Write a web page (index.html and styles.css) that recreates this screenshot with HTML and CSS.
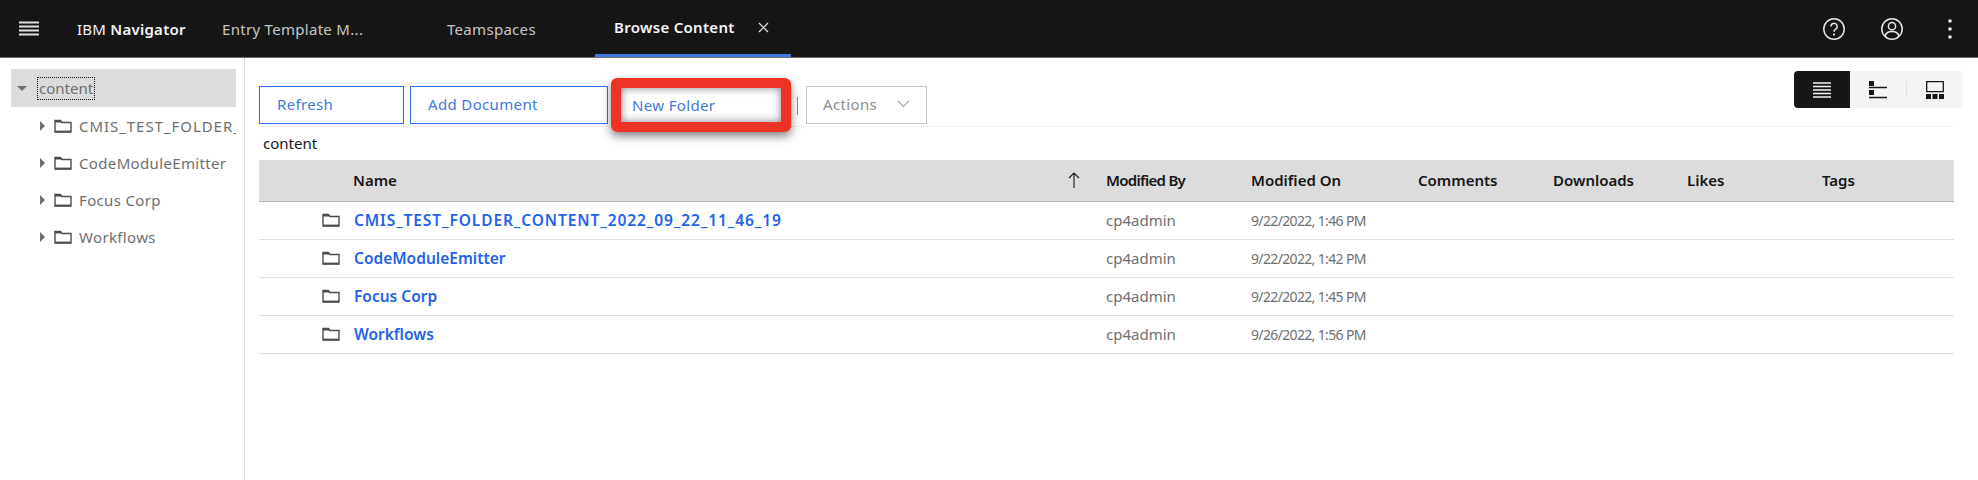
FILE: index.html
```html
<!DOCTYPE html>
<html lang="en">
<head>
  <meta charset="UTF-8">
  <title>IBM Navigator</title>
  <link rel="stylesheet" href="styles.css">
</head>
<body>
  <svg class="defs" width="0" height="0">
    <symbol id="folder" viewBox="0 0 18 14">
      <path d="M1 13V1.5h5.500L8 3.500h9V13z" fill="none" stroke="currentColor" stroke-width="1.400"/>
      <path d="M1 1.500h5.500L8 3.500H1z" fill="currentColor"/>
      <path d="M1 12.500h16" stroke="currentColor" stroke-width="1.800"/>
    </symbol>
  </svg>

  <header class="topbar">
    <svg class="menu-icon" width="20" height="16" viewBox="0 0 20 16">
      <path d="M0 1.500h20M0 5.500h20M0 9.500h20M0 13.500h20" stroke="#e0e0e0" stroke-width="2"/>
    </svg>
    <div class="brand">IBM <b>Navigator</b></div>
    <div class="tab tab-entry">Entry Template M...</div>
    <div class="tab tab-spaces">Teamspaces</div>
    <div class="tab tab-active">
      <span>Browse Content</span>
      <svg width="11" height="11" viewBox="0 0 11 11"><path d="M1 1l9 9M10 1l-9 9" stroke="#e8e8e8" stroke-width="1.200"/></svg>
    </div>
    <div class="top-actions">
      <svg class="top-help" width="24" height="24" viewBox="0 0 24 24">
        <circle cx="12" cy="12" r="10.200" fill="none" stroke="#e8e8e8" stroke-width="1.500"/>
        <path d="M8.800 9.500a3.200 3.200 0 1 1 4.900 2.700c-1 .7-1.700 1.300-1.700 2.600" fill="none" stroke="#e8e8e8" stroke-width="1.500"/>
        <circle cx="12" cy="17.600" r="1.100" fill="#e8e8e8"/>
      </svg>
      <svg class="top-user" width="24" height="24" viewBox="0 0 24 24">
        <circle cx="12" cy="12" r="10.200" fill="none" stroke="#e8e8e8" stroke-width="1.500"/>
        <circle cx="12" cy="9.200" r="3.600" fill="none" stroke="#e8e8e8" stroke-width="1.500"/>
        <path d="M5.200 19c.6-3 3-4.400 6.800-4.400s6.200 1.400 6.800 4.400" fill="none" stroke="#e8e8e8" stroke-width="1.500"/>
      </svg>
      <svg width="6" height="22" viewBox="0 0 6 22">
        <circle cx="3" cy="3" r="1.800" fill="#e8e8e8"/><circle cx="3" cy="11" r="1.800" fill="#e8e8e8"/><circle cx="3" cy="19" r="1.800" fill="#e8e8e8"/>
      </svg>
    </div>
  </header>

  <div class="workspace">
    <aside class="sidebar">
      <div class="tree-root">
        <span class="caret-down"></span>
        <span class="root-label">content</span>
      </div>
      <div class="tree-item"><span class="caret-right"></span><svg class="folder"><use href="#folder"/></svg><span class="tree-text tree-long">CMIS_TEST_FOLDER_CONTENT_2022_09_22_11_46_19</span></div>
      <div class="tree-item"><span class="caret-right"></span><svg class="folder"><use href="#folder"/></svg><span class="tree-text">CodeModuleEmitter</span></div>
      <div class="tree-item"><span class="caret-right"></span><svg class="folder"><use href="#folder"/></svg><span class="tree-text">Focus Corp</span></div>
      <div class="tree-item"><span class="caret-right"></span><svg class="folder"><use href="#folder"/></svg><span class="tree-text">Workflows</span></div>
    </aside>

    <main class="content">
      <div class="toolbar">
        <button class="btn btn-refresh">Refresh</button>
        <button class="btn btn-add">Add Document</button>
        <div class="new-folder">
          <button class="btn-plain">New Folder</button>
          <div class="callout"></div>
        </div>
        <span class="divider"></span>
        <button class="btn-actions">Actions
          <svg width="13" height="8" viewBox="0 0 13 8"><path d="M1 1l5.500 5.500L12 1" fill="none" stroke="#a8a8a8" stroke-width="1.200"/></svg>
        </button>
        <div class="view-switch">
          <div class="view-btn view-on">
            <svg width="18" height="16" viewBox="0 0 18 16"><path d="M0 1h18M0 4.500h18M0 8h18M0 11.500h18M0 15h18" stroke="#f4f4f4" stroke-width="1.700"/></svg>
          </div>
          <div class="view-btn">
            <svg width="18" height="18" viewBox="0 0 18 18"><path d="M0 0h5v5H0zM0 9h5v5H0z" fill="#161616"/><path d="M0 6.500h18M0 16.500h18" stroke="#161616" stroke-width="1.300"/></svg>
          </div>
          <span class="view-sep"></span>
          <div class="view-btn">
            <svg width="18" height="18" viewBox="0 0 18 18"><path d="M.7.700h16.600v10H.7z" fill="none" stroke="#161616" stroke-width="1.300"/><path d="M0 13h5v5H0zM6.500 13h5v5h-5zM13 13h5v5h-5z" fill="#161616"/></svg>
          </div>
        </div>
      </div>

      <div class="crumb">content</div>

      <table class="grid">
        <thead>
          <tr>
            <th class="col-icon"></th>
            <th class="col-name">Name<svg class="sort" width="12" height="16" viewBox="0 0 12 16"><path d="M6 16V1M1 6l5-5 5 5" fill="none" stroke="#161616" stroke-width="1.100"/></svg></th>
            <th class="col-by">Modified By</th>
            <th class="col-on">Modified On</th>
            <th class="col-comments">Comments</th>
            <th class="col-downloads">Downloads</th>
            <th class="col-likes">Likes</th>
            <th>Tags</th>
          </tr>
        </thead>
        <tbody>
          <tr><td class="cell-icon"><svg class="folder"><use href="#folder"/></svg></td><td><a class="name-long" href="#">CMIS_TEST_FOLDER_CONTENT_2022_09_22_11_46_19</a></td><td>cp4admin</td><td class="cell-date">9/22/2022, 1:46 PM</td><td></td><td></td><td></td><td></td></tr>
          <tr><td class="cell-icon"><svg class="folder"><use href="#folder"/></svg></td><td><a href="#">CodeModuleEmitter</a></td><td>cp4admin</td><td class="cell-date">9/22/2022, 1:42 PM</td><td></td><td></td><td></td><td></td></tr>
          <tr><td class="cell-icon"><svg class="folder"><use href="#folder"/></svg></td><td><a href="#">Focus Corp</a></td><td>cp4admin</td><td class="cell-date">9/22/2022, 1:45 PM</td><td></td><td></td><td></td><td></td></tr>
          <tr><td class="cell-icon"><svg class="folder"><use href="#folder"/></svg></td><td><a href="#">Workflows</a></td><td>cp4admin</td><td class="cell-date">9/26/2022, 1:56 PM</td><td></td><td></td><td></td><td></td></tr>
        </tbody>
      </table>
    </main>
  </div>
</body>
</html>
```

FILE: styles.css
```css
* {
  box-sizing: border-box;
}

body {
  margin: 0;
  height: 480px;
  overflow: hidden;
  background-color: #ffffff;
  font-family: "Noto Sans", Roboto, Arial, sans-serif;
  font-size: 15px;
  color: #161616;
}

.defs {
  display: block;
  height: 0;
}

/* top bar */
.topbar {
  display: flex;
  align-items: center;
  height: 58px;
  background-color: #161616;
  border-bottom: 1px solid #6f6f6f;
  color: #c6c6c6;
}

.menu-icon {
  margin-left: 19px;
}

.brand {
  margin-left: 38px;
  width: 145px;
  color: #f4f4f4;
  letter-spacing: 0.25px;
}

.brand b {
  font-weight: 600;
}

.tab {
  display: flex;
  align-items: center;
  height: 57px;
  letter-spacing: 0.3px;
}

.tab-entry {
  width: 225px;
}

.tab-spaces {
  width: 148px;
}

.tab-active {
  width: 196px;
  padding-left: 19px;
  gap: 23px;
  color: #f4f4f4;
  font-weight: 600;
  border-bottom: 3px solid #4178e0;
}

.top-actions {
  display: flex;
  align-items: center;
  margin-left: auto;
  margin-right: 25px;
}

.top-help {
  margin-right: 34px;
}

.top-user {
  margin-right: 43px;
}

/* side tree */
.workspace {
  display: flex;
  height: 422px;
}

.sidebar {
  width: 245px;
  flex: none;
  padding: 11px 8px 0 11px;
  border-right: 1px dotted #c6c6c6;
  color: #6f6f6f;
}

.tree-root {
  display: flex;
  align-items: center;
  height: 38px;
  padding-left: 6px;
  background-color: #dcdcdc;
}

.caret-down {
  width: 0;
  height: 0;
  border-left: 5px solid transparent;
  border-right: 5px solid transparent;
  border-top: 5px solid #6f6f6f;
}

.root-label {
  margin-left: 10px;
  padding: 0 1px;
  line-height: 21px;
  border: 1px dotted #161616;
}

.tree-item {
  display: flex;
  align-items: center;
  height: 37px;
  padding-left: 29px;
  white-space: nowrap;
  overflow: hidden;
  letter-spacing: 0.35px;
}

.caret-right {
  flex: none;
  width: 0;
  height: 0;
  margin-right: 9px;
  border-top: 5px solid transparent;
  border-bottom: 5px solid transparent;
  border-left: 5px solid #6f6f6f;
}

.folder {
  flex: none;
  width: 18px;
  height: 14px;
  color: #4d4d4d;
}

.tree-text {
  margin-left: 7px;
}

.tree-long {
  letter-spacing: 0.95px;
}

/* main area */
.content {
  flex: 1;
  min-width: 0;
  padding: 14px 24px 0 14px;
}

.toolbar {
  display: flex;
  align-items: flex-start;
  height: 55px;
  padding-top: 14px;
  border-bottom: 1px dotted #e0e0e0;
}

.btn,
.btn-plain,
.btn-actions {
  height: 38px;
  padding-bottom: 2px;
  font-family: inherit;
  font-size: 15px;
  letter-spacing: 0.35px;
  text-align: left;
  background-color: #ffffff;
  cursor: pointer;
}

.btn {
  padding-left: 17px;
  padding-right: 0;
  padding-top: 0;
  color: #4178e0;
  border: 1px solid #2f6fed;
}

.btn-refresh {
  width: 145px;
  margin-right: 6px;
}

.btn-add {
  width: 198px;
  margin-right: 3px;
}

.new-folder {
  position: relative;
  width: 180px;
}

.btn-plain {
  width: 100%;
  padding-left: 21px;
  color: #4178e0;
  border: none;
}

.callout {
  position: absolute;
  left: 0;
  top: -8px;
  width: 180px;
  height: 54px;
  border: 10px solid #ee3324;
  border-radius: 6px;
  box-shadow: 0 4px 10px rgba(0, 0, 0, 0.5), inset 0 0 8px rgba(0, 0, 0, 0.5);
}

.divider {
  width: 1px;
  height: 18px;
  margin: 11px 8px 0 6px;
  background-color: #8d8d8d;
}

.btn-actions {
  display: flex;
  align-items: center;
  justify-content: space-between;
  width: 121px;
  padding: 0 16px 2px;
  color: #8d8d8d;
  border: 1px solid #c6c6c6;
}

.view-switch {
  display: flex;
  align-items: center;
  margin-left: auto;
  margin-top: -15px;
  margin-right: -9px;
  height: 37px;
  background-color: #f4f4f4;
  border-radius: 4px;
}

.view-btn {
  display: flex;
  align-items: center;
  justify-content: center;
  width: 56px;
  height: 37px;
}

.view-on {
  background-color: #161616;
  border-radius: 4px 0 0 4px;
}

.view-sep {
  width: 1px;
  height: 15px;
  background-color: #e0e0e0;
}

.crumb {
  height: 27px;
  padding: 6px 0 0 4px;
  line-height: 20px;
}

/* table */
.grid {
  width: 1695px;
  margin-top: 6px;
  border-collapse: collapse;
  table-layout: fixed;
}

.grid th {
  height: 41px;
  padding: 0;
  text-align: left;
  font-weight: 600;
  background-color: #dcdcdc;
  border-bottom: 1px solid #b4b4b4;
}

.grid td {
  height: 38px;
  padding: 0;
  color: #6f6f6f;
  border-bottom: 1px solid #e0e0e0;
}

.col-icon {
  width: 94px;
}

.col-name {
  position: relative;
  width: 753px;
}

.sort {
  position: absolute;
  right: 26px;
  top: 12px;
}

.col-by {
  width: 145px;
  letter-spacing: -0.7px;
}

.col-on {
  width: 167px;
}

.col-comments {
  width: 135px;
}

.col-downloads {
  width: 134px;
}

.col-likes {
  width: 135px;
}

.cell-icon {
  padding-left: 62px !important;
  vertical-align: middle;
}

.cell-icon .folder {
  display: block;
  margin-left: 0;
  width: 20px;
}

.cell-date {
  font-size: 14px;
  letter-spacing: -0.65px;
}

.grid a {
  padding-left: 1px;
  color: #2462ea;
  font-size: 15.5px;
  font-weight: 600;
  text-decoration: none;
}

.grid a.name-long {
  letter-spacing: 0.9px;
}
```
